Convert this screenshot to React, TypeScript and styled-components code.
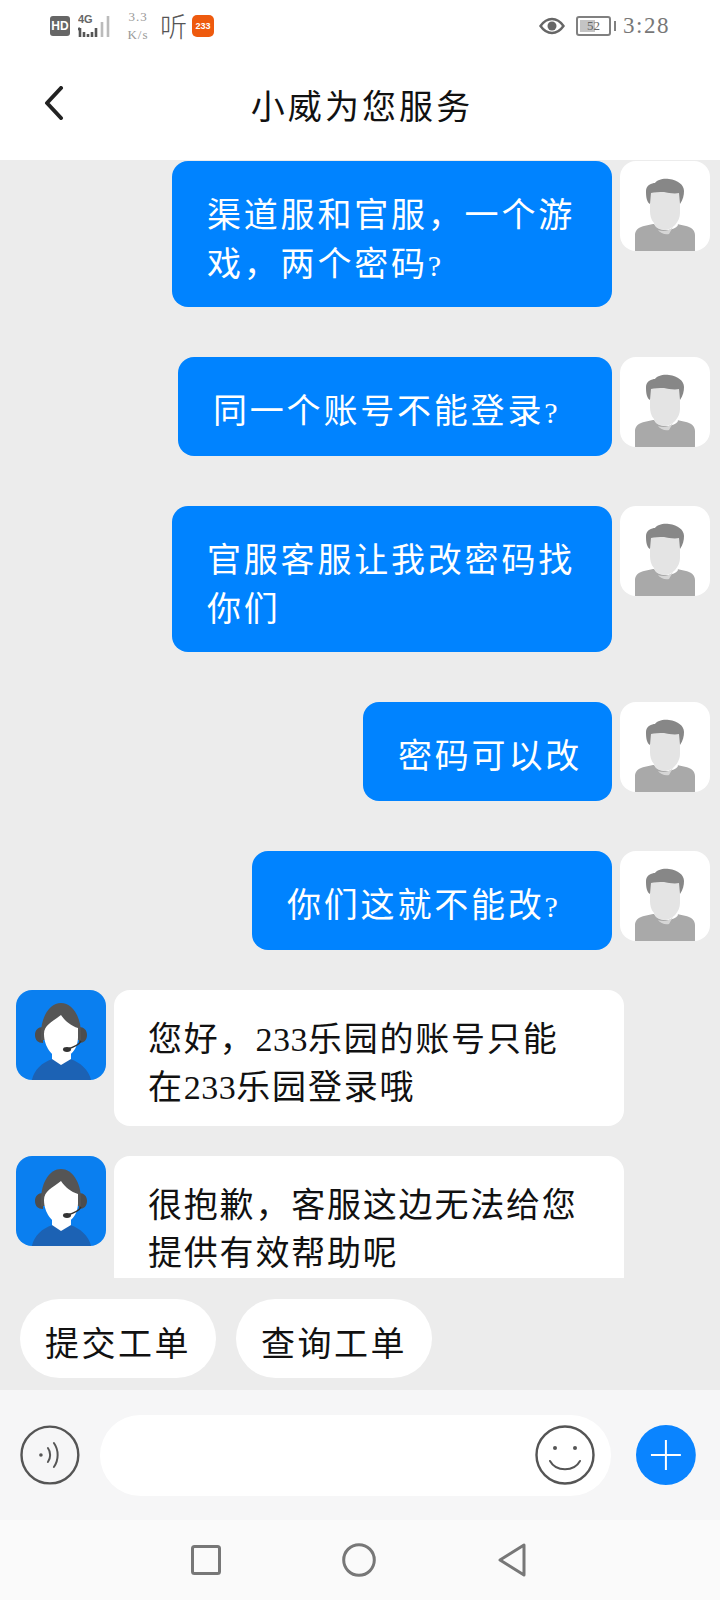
import React from 'react';
import styled, { createGlobalStyle } from 'styled-components';

const GlobalStyle = createGlobalStyle`
  html, body {
    margin: 0;
    padding: 0;
    background: #fff;
  }
  * {
    box-sizing: border-box;
  }
`;

const Page = styled.div`
  width: 720px;
  height: 1600px;
  display: flex;
  flex-direction: column;
  overflow: hidden;
  background: #ececec;
  font-family: 'Liberation Serif', 'Noto Sans CJK SC', serif;
`;

const StatusBar = styled.div`
  height: 50px;
  flex: none;
  background: #fff;
  display: flex;
  align-items: center;
  justify-content: space-between;
  padding: 1px 50px 0 50px;
`;

const StatusGroup = styled.div`
  display: flex;
  align-items: center;
`;

const HdBadge = styled.div`
  width: 20px;
  height: 20px;
  border-radius: 3px;
  background: #666;
  color: #fff;
  font: bold 12px/20px 'Liberation Sans', sans-serif;
  text-align: center;
`;

const Speed = styled.div`
  width: 24px;
  margin: 0 10px 0 12px;
  color: #999;
  font-size: 13px;
  line-height: 18px;
  text-align: center;
  letter-spacing: 1px;
  white-space: nowrap;
`;

const Listen = styled.div`
  width: 29px;
  color: #555;
  font: 300 27px/27px 'Noto Sans CJK SC', sans-serif;
`;

const AppBadge = styled.div`
  width: 22px;
  height: 22px;
  margin-left: 3px;
  border-radius: 5px;
  background: #ee5a0e;
  color: #fff;
  font: bold 9px/22px 'Liberation Sans', sans-serif;
  text-align: center;
`;

const Battery = styled.div`
  position: relative;
  width: 35px;
  height: 20px;
  margin: 0 12px 0 11px;
  border: 2px solid #808080;
  border-radius: 3px;
  color: #666;
  font-size: 13px;
  line-height: 16px;
  text-align: center;

  &::before {
    content: '';
    position: absolute;
    left: 2px;
    top: 2px;
    bottom: 2px;
    width: 15px;
    background: #c4c4c4;
  }

  &::after {
    content: '';
    position: absolute;
    right: -7px;
    top: 3px;
    width: 2px;
    height: 10px;
    background: #808080;
  }
`;

const BatteryLevel = styled.span`
  position: relative;
`;

const Clock = styled.div`
  color: #777;
  font-size: 23px;
  letter-spacing: 1.500px;
`;

const TitleBar = styled.header`
  position: relative;
  height: 110px;
  flex: none;
  background: #fff;
  display: flex;
  align-items: center;
  justify-content: center;
  color: #111;
  font-size: 34px;
  letter-spacing: 3.100px;
  padding: 0 0 2px 4px;
`;

const BackButton = styled.svg`
  position: absolute;
  left: 43px;
  top: 36px;
`;

const MessageList = styled.main`
  height: 1118px;
  flex: none;
  padding-top: 1px;
  overflow: hidden;
`;

const Row = styled.div<{ $out?: boolean; $after: number }>`
  display: flex;
  align-items: flex-start;
  justify-content: ${p => (p.$out ? 'flex-end' : 'flex-start')};
  gap: 8px;
  padding: ${p => (p.$out ? '0 10px 0 0' : '0 0 0 16px')};
  margin-bottom: ${p => p.$after}px;
`;

const Bubble = styled.div<{ $width: number }>`
  width: ${p => p.$width}px;
  min-height: 99px;
  padding: 30px 0 18px 35px;
  border-radius: 16px;
  background: #0083ff;
  color: #fff;
  font-size: 34px;
  line-height: 49px;
  letter-spacing: 2.800px;
  white-space: nowrap;
`;

const AgentBubble = styled.div`
  width: 510px;
  padding: 26px 36px 14px 34px;
  border-radius: 16px;
  background: #fff;
  color: #111;
  font-size: 34px;
  line-height: 48px;
  letter-spacing: 1.800px;
`;

const Latin = styled.span`
  letter-spacing: 0.500px;
`;

const Question = styled.span`
  display: inline-block;
  width: 34.500px;
  font-size: 30px;
  line-height: 1;
  letter-spacing: 0;
`;

const Avatar = styled.svg`
  flex: none;
  display: block;
  border-radius: 16px;
`;

const QuickBar = styled.div`
  height: 112px;
  flex: none;
  display: flex;
  gap: 20px;
  padding: 21px 0 0 20px;
`;

const Chip = styled.div`
  width: 196px;
  height: 79px;
  padding-top: 13px;
  border-radius: 40px;
  background: #fff;
  color: #111;
  font-size: 34px;
  line-height: 66px;
  letter-spacing: 2.500px;
  text-align: center;
`;

const InputBar = styled.div`
  height: 130px;
  flex: none;
  display: flex;
  align-items: center;
  background: #f6f6f7;
  padding: 0 24px 0 20px;
`;

const InputBox = styled.div`
  width: 513px;
  height: 81px;
  margin: 0 25px 0 20px;
  padding-right: 16px;
  border-radius: 41px;
  background: #fff;
  display: flex;
  align-items: center;
  justify-content: flex-end;
`;

const NavBar = styled.nav`
  height: 80px;
  flex: none;
  display: flex;
  align-items: center;
  justify-content: center;
  gap: 121px;
  background: #fafafa;
  padding-right: 2px;
`;

const FaceAvatar = () => (
  <Avatar width="90" height="90" viewBox="0 0 90 90">
    <rect width="90" height="90" fill="#fff" />
    <path d="M15 90V74c0-5 4-8 9-9l9-2h24l9 2c5 1 9 4 9 9v16z" fill="#a9a9a9" />
    <path d="M34 62c2 9 20 9 24 2l-2-8H36z" fill="#fff" />
    <path d="M30 30h30v22c0 9-8 17-15 17-3 0-7-1-9-3-1-1-2-3-2-4-3-3-4-8-4-12z" fill="#e4e4e4" />
    <path d="M38 69c5 2 11 1 15-3l-4 7c-4 1-9-1-11-4z" fill="#d6d6d6" />
    <path d="M30 43c-4-2-4-10-4-13 0-6 6-8 9-8 2-3 8-5 14-4 9 1 15 6 15 12 0 4-1 9-4 13l-1-11c-4 1-11 0-15-1-5 0-10 0-13 1z" fill="#878787" />
  </Avatar>
);

const AgentAvatar = () => (
  <Avatar width="90" height="90" viewBox="0 0 90 90">
    <rect width="90" height="90" fill="#0a7ff0" />
    <path d="M16 90c2-10 10-18 21-21l8 5 9-5c10 3 19 11 21 21z" fill="#1c62b4" />
    <path d="M36 60h19v9l-10 6-9-6z" fill="#fff" />
    <path d="M19 45c0-5 3-8 8-8v16c-5 0-8-3-8-8zM63 37c5 0 8 3 8 8s-3 8-8 8z" fill="#4d4d4d" />
    <path d="M25 44c0-18 9-31 20-31s20 13 20 31v6H25z" fill="#555" />
    <path d="M28 44c0-9 8-12 17-19 4 6 10 11 17 13v9c0 12-8 21-17 21s-17-12-17-24z" fill="#fff" />
    <path d="M65 51c-2 4-7 6-13 8" stroke="#333" strokeWidth="1.500" fill="none" />
    <ellipse cx="51" cy="59.500" rx="4" ry="2.400" fill="#333" />
  </Avatar>
);

const q = <Question>?</Question>;

const outgoing = [
  { key: 'a', width: 440, body: <>渠道服和官服，一个游<br />戏，两个密码{q}</>, after: 50 },
  { key: 'b', width: 434, body: <>同一个账号不能登录{q}</>, after: 50 },
  { key: 'c', width: 440, body: <>官服客服让我改密码找<br />你们</>, after: 50 },
  { key: 'd', width: 249, body: <>密码可以改</>, after: 50 },
  { key: 'e', width: 360, body: <>你们这就不能改{q}</>, after: 40 },
];

const incoming = [
  { key: 'f', body: <>您好，<Latin>233</Latin>乐园的账号只能<br />在<Latin>233</Latin>乐园登录哦</>, after: 30 },
  { key: 'g', body: <>很抱歉，客服这边无法给您<br />提供有效帮助呢</>, after: 0 },
];

export default function App() {
  return (
    <Page>
      <GlobalStyle />
      <StatusBar>
        <StatusGroup>
          <HdBadge>HD</HdBadge>
          <svg width="36" height="26" viewBox="0 0 36 26" style={{ marginLeft: 8 }}>
            <text x="0" y="10" fontFamily="Liberation Sans" fontWeight="bold" fontSize="11" fill="#666">4G</text>
            <path d="M2 15v9M0 17l2-2M6 19v5M10 21v3M14 19v5M18 15v9" stroke="#555" strokeWidth="2.600" fill="none" />
            <path d="M24 9v15M30 3v21" stroke="#bbb" strokeWidth="2.600" fill="none" />
          </svg>
          <Speed>3.3<br />K/s</Speed>
          <Listen>听</Listen>
          <AppBadge>233</AppBadge>
        </StatusGroup>
        <StatusGroup>
          <svg width="26" height="18" viewBox="0 0 26 18">
            <path d="M1.500 9C5 4 8.500 2 13 2s8 2 11.500 7C21 14 17.500 16 13 16S5 14 1.500 9z" fill="none" stroke="#666" strokeWidth="2.400" />
            <circle cx="13" cy="9" r="4.500" fill="#666" />
          </svg>
          <Battery><BatteryLevel>52</BatteryLevel></Battery>
          <Clock>3:28</Clock>
        </StatusGroup>
      </StatusBar>

      <TitleBar>
        <BackButton width="22" height="34" viewBox="0 0 22 34">
          <path d="M18 2L4 17l14 15" fill="none" stroke="#222" strokeWidth="4" strokeLinecap="round" strokeLinejoin="round" />
        </BackButton>
        小威为您服务
      </TitleBar>

      <MessageList>
        {outgoing.map(m => (
          <Row key={m.key} $out $after={m.after}>
            <Bubble $width={m.width}>{m.body}</Bubble>
            <FaceAvatar />
          </Row>
        ))}
        {incoming.map(m => (
          <Row key={m.key} $after={m.after}>
            <AgentAvatar />
            <AgentBubble>{m.body}</AgentBubble>
          </Row>
        ))}
      </MessageList>

      <QuickBar>
        <Chip>提交工单</Chip>
        <Chip>查询工单</Chip>
      </QuickBar>

      <InputBar>
        <svg width="60" height="60" viewBox="0 0 60 60">
          <circle cx="30" cy="30" r="28.500" fill="none" stroke="#555" strokeWidth="2.400" />
          <circle cx="21" cy="30" r="1.800" fill="#555" />
          <path d="M28 23c3 4 3 10 0 14M34 18c5 7 5 17 0 24" fill="none" stroke="#555" strokeWidth="2" strokeLinecap="round" />
        </svg>
        <InputBox>
          <svg width="60" height="60" viewBox="0 0 60 60">
            <circle cx="30" cy="30" r="28.500" fill="none" stroke="#555" strokeWidth="2.400" />
            <circle cx="20" cy="23" r="2" fill="#555" />
            <circle cx="40" cy="23" r="2" fill="#555" />
            <path d="M15 36c6 11 24 11 30 0" fill="none" stroke="#555" strokeWidth="2" strokeLinecap="round" />
          </svg>
        </InputBox>
        <svg width="60" height="60" viewBox="0 0 60 60">
          <circle cx="30" cy="30" r="30" fill="#0a84ff" />
          <path d="M30 15v30M15 30h30" stroke="#fff" strokeWidth="2" />
        </svg>
      </InputBar>

      <NavBar>
        <svg width="30" height="30" viewBox="0 0 30 30">
          <rect x="1.500" y="1.500" width="27" height="27" rx="2" fill="none" stroke="#777" strokeWidth="3" />
        </svg>
        <svg width="34" height="34" viewBox="0 0 34 34">
          <circle cx="17" cy="17" r="15.300" fill="none" stroke="#777" strokeWidth="3" />
        </svg>
        <svg width="30" height="34" viewBox="0 0 30 34">
          <path d="M27 2v30L3 17z" fill="none" stroke="#777" strokeWidth="3" strokeLinejoin="round" />
        </svg>
      </NavBar>
    </Page>
  );
}
